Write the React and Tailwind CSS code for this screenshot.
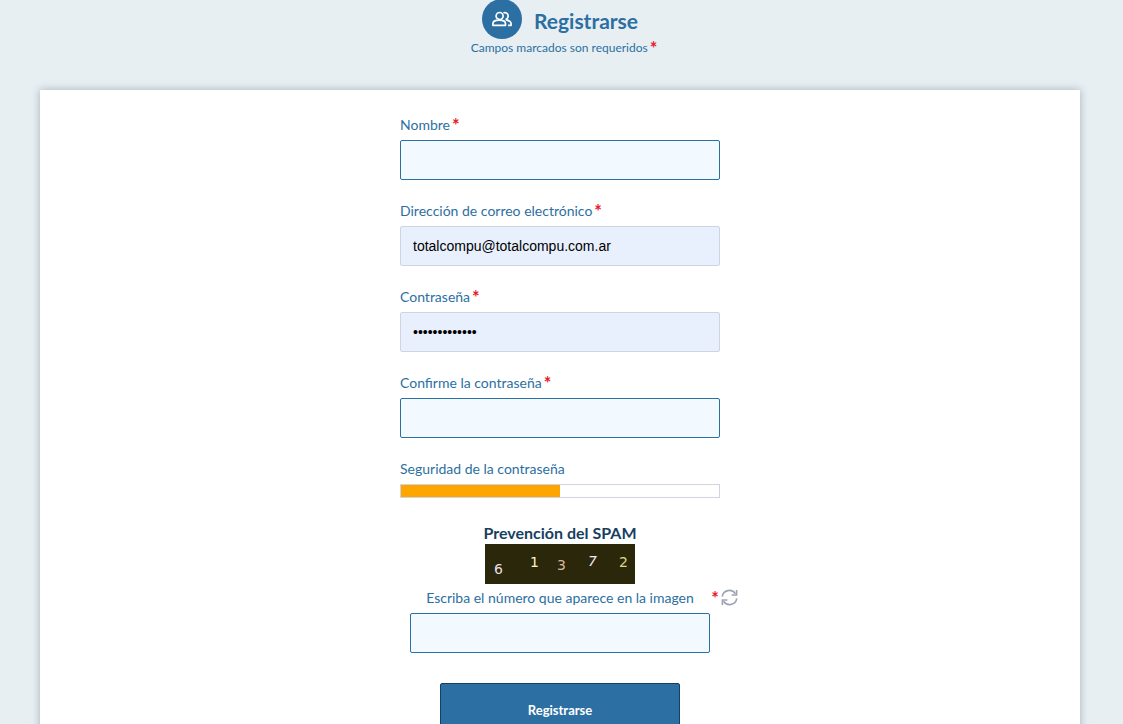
import { useState } from 'react'

const FIELDS = [
  { id: 'name', label: 'Nombre', type: 'text' },
  { id: 'email', label: 'Dirección de correo electrónico', type: 'email' },
  { id: 'password', label: 'Contraseña', type: 'password' },
  { id: 'confirm', label: 'Confirme la contraseña', type: 'password' },
]

function Required() {
  return <span className="ml-0.5 text-lg leading-none font-bold text-[#e8192c]">*</span>
}

function UsersIcon() {
  return (
    <svg viewBox="0 0 20 16" className="h-4 w-5" fill="none" stroke="currentColor" strokeWidth="1.7">
      <circle cx="7.6" cy="5" r="3.5" />
      <path d="M.9 14.3v-1.6c0-2 2.4-3.6 6.3-3.6s6.3 1.6 6.3 3.6v1.6z" strokeLinejoin="round" />
      <path d="M11.4 1.9a3.4 3.4 0 0 1 4.8 3.1c0 1.4-.8 2.6-2 3.2v.6c2.8.6 4.9 2 4.9 4v1.5h-3" strokeLinejoin="round" />
    </svg>
  )
}

function RefreshIcon() {
  return (
    <svg viewBox="0 0 17 17" className="h-[17px] w-[17px]" fill="none" stroke="currentColor" strokeWidth="1.6">
      <path d="M1.2 7.6a7.2 7.2 0 0 1 13.2-2.8M15.8 9.4a7.2 7.2 0 0 1-13.2 2.8" />
      <path d="M15.6 1v5h-5M1.4 16v-5h5" />
    </svg>
  )
}

function Captcha() {
  return (
    <svg viewBox="0 0 150 40" className="mx-auto h-10 w-[150px] bg-[#2b270b]" fontFamily="'DejaVu Sans', sans-serif" fontSize="14">
      <text x="9" y="30" fill="#e6dfe6">6</text>
      <text x="45" y="23" fill="#f7f6c4">1</text>
      <text x="72" y="26" fill="#d9b8a0">3</text>
      <text x="103" y="22" fill="#f0eaf2" fontStyle="italic">7</text>
      <text x="134" y="23" fill="#dcd98a">2</text>
    </svg>
  )
}

function Field({ field, value, onChange }) {
  const filled = value !== ''
  return (
    <div className="mb-5">
      <label htmlFor={field.id} className="mb-1 flex h-[22px] items-center text-sm text-[#2c6fa2]">
        {field.label}
        <Required />
      </label>
      <input
        id={field.id}
        type={field.type}
        value={value}
        onChange={(e) => onChange(field.id, e.target.value)}
        className={`h-10 w-full rounded-xs border px-3 font-['Liberation_Sans',sans-serif] text-sm text-black outline-none ${
          filled ? 'border-[#cfd3e4] bg-[#e8f0fe]' : 'border-[#2c6fa2] bg-[#f2f9ff]'
        }`}
      />
    </div>
  )
}

function App() {
  const [values, setValues] = useState({
    name: '',
    email: 'totalcompu@totalcompu.com.ar',
    password: 'contrasena123',
    confirm: '',
  })
  const [code, setCode] = useState('')
  const strength = 50

  function handleChange(id, value) {
    setValues({ ...values, [id]: value })
  }

  return (
    <div className="min-h-screen bg-[#e7eff3] pr-[43px] pl-10 font-[Lato,sans-serif] text-[#2c6fa2]">
      <header className="flex h-[90px] flex-col items-center">
        <div className="flex h-[39px] items-end gap-3">
          <span className="flex h-10 w-10 shrink-0 items-center justify-center rounded-full bg-[#2c6fa2] text-white">
            <UsersIcon />
          </span>
          <h1 className="text-[21px] leading-9 font-bold">Registrarse</h1>
        </div>
        <p className="flex h-[18px] items-center pl-2 text-xs">
          Campos marcados son requeridos
          <Required />
        </p>
      </header>

      <main className="bg-white px-4 pt-6 pb-10 shadow-[0_0_8px_rgba(70,85,90,0.4)]">
        <form onSubmit={(e) => e.preventDefault()} className="mx-auto max-w-80">
          {FIELDS.map((field) => (
            <Field key={field.id} field={field} value={values[field.id]} onChange={handleChange} />
          ))}

          <p id="strength" className="mb-1 text-sm leading-[22px]">Seguridad de la contraseña</p>
          <div role="meter" aria-labelledby="strength" aria-valuenow={strength} className="h-3.5 border border-[#cfd3e4]">
            <div className="h-full bg-[#ffa500]" style={{ width: `${strength}%` }} />
          </div>

          <h2 className="mt-6 text-center text-base leading-[22px] font-bold text-[#173f5f]">Prevención del SPAM</h2>
          <Captcha />
          <div className="-mx-5 mt-0.5 mb-1 grid h-[23px] grid-cols-[1fr_auto_1fr] items-center">
            <label htmlFor="code" className="col-start-2 text-sm">Escriba el número que aparece en la imagen</label>
            <div className="flex items-center justify-end gap-0.5 pr-0.5">
              <Required />
              <button type="button" aria-label="Actualizar imagen" className="text-[#9ca5b5]">
                <RefreshIcon />
              </button>
            </div>
          </div>
          <div className="px-2.5">
            <input
              id="code"
              type="text"
              value={code}
              onChange={(e) => setCode(e.target.value)}
              className="h-10 w-full rounded-xs border border-[#2c6fa2] bg-[#f2f9ff] px-3 text-sm outline-none"
            />
          </div>

          <div className="mt-[30px] px-10">
            <button type="submit" className="h-14 w-full rounded-xs border border-[#173f5f] bg-[#2c6fa2] text-[13px] font-bold text-white">
              Registrarse
            </button>
          </div>
        </form>
      </main>
    </div>
  )
}

export default App
